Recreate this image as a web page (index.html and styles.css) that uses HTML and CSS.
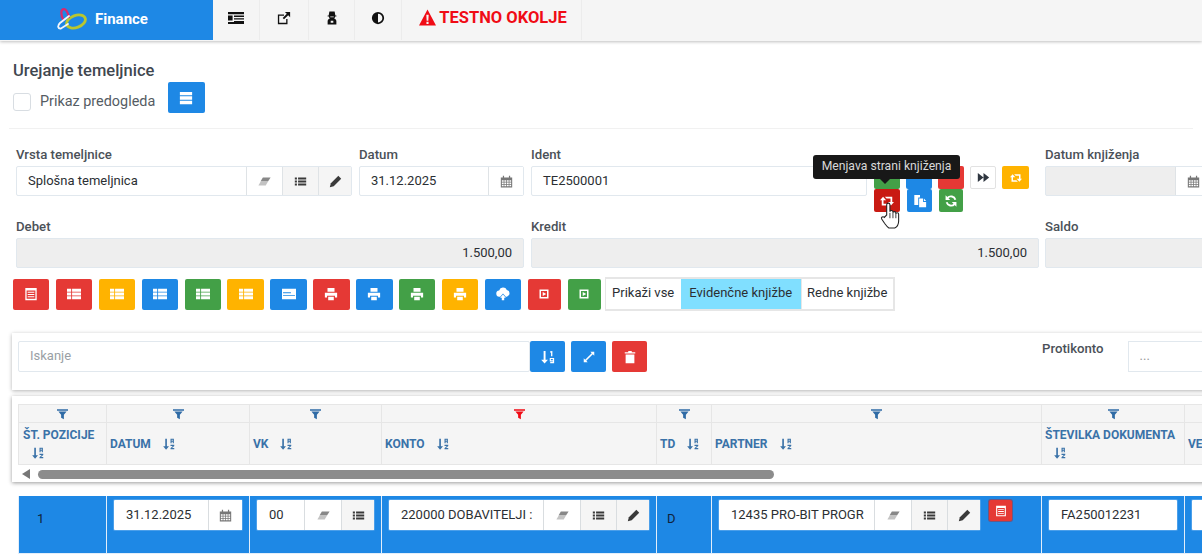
FILE: index.html
```html
<!DOCTYPE html>
<html lang="sl">

<head>
    <meta charset="UTF-8">
    <title>Finance</title>
    <link rel="stylesheet" href="styles.css">
</head>

<body>
    <!-- ikone -->
    <svg class="sprite" xmlns="http://www.w3.org/2000/svg">
        <symbol id="i-indent" viewBox="0 0 16 16"><path d="M0 2h16v2.200H0zM6 5.500h10v1.400H6zM0 5.600h4.600v4.800H0zM6 8.200h10v1.400H6zM6 10.900h10v1.400H6zM0 12h16v2H0z"/></symbol>
        <symbol id="i-extlink" viewBox="0 0 16 16"><path d="M1 4h7v1.500H2.500v8h8V9H12v6H1z"/><path d="M9 1h6v6l-2.200-2.200L8 9.500 6.500 8l4.700-4.800z"/></symbol>
        <symbol id="i-secret" viewBox="0 0 16 16"><path fill-rule="evenodd" d="M5 .5h6l.8 4.500H13v1.200h-1.500c0 1-.6 2-1.200 2.400 1.500.4 2.700 1.400 2.700 3V15.500H3v-3.900c0-1.600 1.200-2.600 2.700-3-.6-.4-1.200-1.400-1.200-2.400H3V5h1.200zM6 6.200v1h4v-1zM6.500 11v2.500h3V11z"/></symbol>
        <symbol id="i-adjust" viewBox="0 0 16 16"><path fill-rule="evenodd" d="M8 1a7 7 0 1 1 0 14A7 7 0 0 1 8 1zm0 2v10a5 5 0 0 0 0-10z"/></symbol>
        <symbol id="i-warn" viewBox="0 0 16 16"><path fill-rule="evenodd" d="M8 .5L16 15.500H0zM6.900 5.500l.3 5.500h1.600l.3-5.500zM7 12v2h2v-2z"/></symbol>
        <symbol id="i-stack" viewBox="0 0 16 16"><path d="M1 1h14v3.800H1zM1 6h14v4H1zM1 11.200h14V15H1z"/></symbol>
        <symbol id="i-eraser" viewBox="0 0 16 16"><path d="M6 3h9.500L12.300 8H3z"/><path opacity=".5" d="M3 8.500h9L9.500 13H.5z"/></symbol>
        <symbol id="i-list" viewBox="0 0 16 16"><path d="M1 3h2.600v2.400H1zM5 3h10v2.400H5zM1 6.800h2.600v2.400H1zM5 6.800h10v2.400H5zM1 10.600h2.600V13H1zM5 10.600h10V13H5z"/></symbol>
        <symbol id="i-pencil" viewBox="0 0 16 16"><path d="M11.500 1l3.500 3.500-9.200 9.200L1 15l1.300-4.800z"/></symbol>
        <symbol id="i-calendar" viewBox="0 0 16 16"><path fill-rule="evenodd" d="M1 3h14v12.500H1zM2.300 6.500v1.800h2.200V6.500zM5.400 6.500v1.800h2.200V6.500zM8.500 6.500v1.800h2.200V6.500zM11.600 6.500v1.800h2.100V6.500zM2.300 9.200V11h2.200V9.200zM5.400 9.200V11h2.200V9.200zM8.500 9.200V11h2.200V9.200zM11.600 9.200V11h2.100V9.200zM2.300 11.900v1.900h2.200v-1.900zM5.400 11.900v1.900h2.200v-1.900zM8.500 11.900v1.900h2.200v-1.900zM11.600 11.900v1.900h2.100v-1.900z"/><path d="M3.500 1H5v3H3.500zM11 1h1.500v3H11z"/></symbol>
        <symbol id="i-forward" viewBox="0 0 16 16"><path d="M1 2.500l7 5.500-7 5.500zM8 2.500L15 8l-7 5.500z"/></symbol>
        <symbol id="i-retweet" viewBox="0 0 16 16"><path d="M3.500 3L0 7h2v6h8.500l-2-2H4V7h3zM12.500 13L16 9h-2V3H5.500l2 2H12v4H9z"/></symbol>
        <symbol id="i-files" viewBox="0 0 16 16"><path d="M1.500 1H8v3H6v8.500H1.500zM7 5h4.500v4.200H15V15H7z"/><path d="M12.500 5L15 8h-2.500z"/></symbol>
        <symbol id="i-refresh" viewBox="0 0 16 16"><path fill="none" stroke="currentColor" stroke-width="2.200" d="M13 6.500A5.300 5.300 0 0 0 4 4.500M3 9.500a5.300 5.300 0 0 0 9 2"/><path d="M1.800 1.500v5.300h5.300zM14.200 14.500V9.200H8.900z"/></symbol>
        <symbol id="i-listalt" viewBox="0 0 16 16"><path fill-rule="evenodd" d="M1.500 1h13v14h-13zM3 4v9.500h10V4z"/><path d="M4.200 5.500h7.600v1.200H4.200zM4.200 8h7.600v1.200H4.200zM4.200 10.500h7.600v1.200H4.200z"/></symbol>
        <symbol id="i-thlist" viewBox="0 0 16 16"><path d="M0 2h4.800v3.300H0zM5.800 2H16v3.300H5.800zM0 6.300h4.800v3.300H0zM5.800 6.300H16v3.300H5.800zM0 10.700h4.800V14H0zM5.800 10.700H16V14H5.800z"/></symbol>
        <symbol id="i-card" viewBox="0 0 16 16"><path fill-rule="evenodd" d="M0 2h16v12H0zM1.200 6v1h9V6zM1.200 9v1h13.600V9z"/></symbol>
        <symbol id="i-print" viewBox="0 0 16 16"><path d="M4 1h8v4.500H4zM1 6.500h14V12h-2.500v-2h-9v2H1zM4.800 11h6.400v4H4.800z"/></symbol>
        <symbol id="i-cloud" viewBox="0 0 16 16"><path d="M4 11a3.500 3.500 0 0 1-.4-7 4.700 4.700 0 0 1 8.800-.6A3.900 3.900 0 0 1 12.500 11h-1.300L8 7.300 4.800 11zM8 8.500l3.300 3.700H9.400V15H6.600v-2.800H4.700z"/></symbol>
        <symbol id="i-play" viewBox="0 0 16 16"><path fill-rule="evenodd" d="M2 2h12v12H2zM4 4v8h8V4zM6.300 5.300L11 8l-4.700 2.700z"/></symbol>
        <symbol id="i-expand" viewBox="0 0 16 16"><path d="M9.500 2H14v4.500l-1.600-1.600-7.500 7.500L6.500 14H2V9.500l1.600 1.600 7.500-7.500z"/></symbol>
        <symbol id="i-trash" viewBox="0 0 16 16"><path d="M6 1h4v1.500h4V4H2V2.500h4zM3 5h10v10H3z"/></symbol>
        <symbol id="i-filter" viewBox="0 0 16 16"><path d="M0 1h16v2.400H0zM2 4.400h12L10 9v6.500l-4-2V9z"/></symbol>
        <symbol id="i-sort" viewBox="0 0 16 16"><path d="M3 1h2.200v10H8l-3.900 4.500L.2 11H3z"/><path fill-rule="evenodd" d="M10 1h4.500v6h-1.500V5h-1.500v2H10zM11.500 2.300v1.500H13V2.300z"/><path d="M10 9h5v1.500L12 13.400h3V15h-5v-1.500l3-2.900h-3z"/></symbol>
        <symbol id="i-sortnum" viewBox="0 0 16 16"><path d="M3 1h2.200v10H8l-3.900 4.500L.2 11H3z"/><path d="M10.500 1.500L13 1v6h-1.500V2.800l-1 .2z"/><path fill-rule="evenodd" d="M10 9h5v6h-4.500v-1.300h3V13H10zM11.300 10.200v1.600h2.200v-1.600z"/></symbol>
    </svg>

    <header class="topbar">
        <div class="brand">
            <svg class="logo" viewBox="0 0 30 22" fill="none" stroke-linecap="round">
                <ellipse cx="19" cy="13.500" rx="9.800" ry="6" transform="rotate(-20 19 13.500)" stroke="#b9c62f" stroke-width="2.800"/>
                <path d="M6.500 12C3.500 7 3.500 1.200 7 1.200c3 0 4 4.800 5 7.800" stroke="#d8296f" stroke-width="2.200"/>
                <path d="M12 8L3 15c-3 3-2 6 1 5.500L11 16" stroke="#f2f6fb" stroke-width="1.800"/>
            </svg>
            <span>Finance</span>
        </div>
        <a class="nav-item nav-first"><svg class="icon"><use href="#i-indent"/></svg></a>
        <a class="nav-item nav-wide"><svg class="icon"><use href="#i-extlink"/></svg></a>
        <a class="nav-item nav-slim"><svg class="icon"><use href="#i-secret"/></svg></a>
        <a class="nav-item"><svg class="icon"><use href="#i-adjust"/></svg></a>
        <div class="nav-item env-warning"><svg class="icon"><use href="#i-warn"/></svg>TESTNO OKOLJE</div>
    </header>

    <section class="page-head">
        <h1>Urejanje temeljnice</h1>
        <div class="preview-row">
            <span class="checkbox"></span>
            <span class="preview-label">Prikaz predogleda</span>
            <button class="btn blue stack-btn"><svg class="icon"><use href="#i-stack"/></svg></button>
        </div>
    </section>

    <section class="form">
        <div class="form-row first">
            <div class="field w-336">
                <label>Vrsta temeljnice</label>
                <div class="input-group">
                    <div class="control">Splošna temeljnica</div>
                    <span class="addon eraser"><svg class="icon"><use href="#i-eraser"/></svg></span>
                    <span class="addon gray"><svg class="icon"><use href="#i-list"/></svg></span>
                    <span class="addon gray"><svg class="icon"><use href="#i-pencil"/></svg></span>
                </div>
            </div>
            <div class="field w-165">
                <label>Datum</label>
                <div class="input-group">
                    <div class="control">31.12.2025</div>
                    <span class="addon cal"><svg class="icon"><use href="#i-calendar"/></svg></span>
                </div>
            </div>
            <div class="field w-336">
                <label>Ident</label>
                <div class="input-group">
                    <div class="control">TE2500001</div>
                </div>
            </div>
            <div class="ident-actions">
                <div class="action-row">
                    <button class="mini green"></button>
                    <button class="mini blue"></button>
                    <button class="mini red"></button>
                    <button class="mini white"><svg class="icon"><use href="#i-forward"/></svg></button>
                    <button class="mini yellow"><svg class="icon"><use href="#i-retweet"/></svg></button>
                </div>
                <div class="action-row">
                    <button class="mini hot"><svg class="icon"><use href="#i-retweet"/></svg></button>
                    <button class="mini blue"><svg class="icon"><use href="#i-files"/></svg></button>
                    <button class="mini green"><svg class="icon"><use href="#i-refresh"/></svg></button>
                </div>
                <div class="tooltip">Menjava strani knjiženja</div>
                <svg class="hand" viewBox="0 0 20 26">
                    <path d="M6 13V3.500C6 1.500 9 1.500 9 3.500V10c0-1.500 2.800-1.500 2.800 0v1c0-1.500 2.700-1.500 2.700 0v1c0-1.400 2.600-1.400 2.600.2v6.300c0 3-1.600 5.500-3.600 6.500H8c-1.500-.8-2.500-2.300-4-4.300L1.500 17c-1.200-1.800 1-3.200 2.300-1.800z" fill="#fff" stroke="#222" stroke-width="1"/>
                    <path d="M9 11v5M11.800 11v5M14.500 12v4" stroke="#222" stroke-width=".8"/>
                </svg>
            </div>
            <div class="field w-200 knjizenje">
                <label>Datum knjiženja</label>
                <div class="input-group disabled">
                    <div class="control"></div>
                    <span class="addon cal"><svg class="icon"><use href="#i-calendar"/></svg></span>
                </div>
            </div>
        </div>

        <div class="form-row totals">
            <div class="field w-508">
                <label>Debet</label>
                <div class="input-group disabled">
                    <div class="control right">1.500,00</div>
                </div>
            </div>
            <div class="field w-508 kredit">
                <label>Kredit</label>
                <div class="input-group disabled">
                    <div class="control right">1.500,00</div>
                </div>
            </div>
            <div class="field w-200">
                <label>Saldo</label>
                <div class="input-group disabled">
                    <div class="control right"></div>
                </div>
            </div>
        </div>
    </section>

    <div class="toolbar">
        <button class="btn red"><svg class="icon"><use href="#i-listalt"/></svg></button>
        <button class="btn red"><svg class="icon"><use href="#i-thlist"/></svg></button>
        <button class="btn yellow"><svg class="icon"><use href="#i-thlist"/></svg></button>
        <button class="btn blue"><svg class="icon"><use href="#i-thlist"/></svg></button>
        <button class="btn green"><svg class="icon"><use href="#i-thlist"/></svg></button>
        <button class="btn yellow"><svg class="icon"><use href="#i-thlist"/></svg></button>
        <button class="btn blue"><svg class="icon"><use href="#i-card"/></svg></button>
        <button class="btn red"><svg class="icon"><use href="#i-print"/></svg></button>
        <button class="btn blue"><svg class="icon"><use href="#i-print"/></svg></button>
        <button class="btn green"><svg class="icon"><use href="#i-print"/></svg></button>
        <button class="btn yellow"><svg class="icon"><use href="#i-print"/></svg></button>
        <button class="btn blue"><svg class="icon"><use href="#i-cloud"/></svg></button>
        <button class="btn red narrow"><svg class="icon"><use href="#i-play"/></svg></button>
        <button class="btn green narrow"><svg class="icon"><use href="#i-play"/></svg></button>
        <div class="toggle-group">
            <span class="toggle t-all">Prikaži vse</span>
            <span class="toggle t-evid active">Evidenčne knjižbe</span>
            <span class="toggle t-red">Redne knjižbe</span>
        </div>
    </div>

    <section class="search-panel">
        <div class="search-box">Iskanje</div>
        <button class="btn blue"><svg class="icon"><use href="#i-sortnum"/></svg></button>
        <button class="btn blue"><svg class="icon"><use href="#i-expand"/></svg></button>
        <button class="btn red"><svg class="icon"><use href="#i-trash"/></svg></button>
        <span class="protikonto-label">Protikonto</span>
        <div class="protikonto-box">...</div>
    </section>

    <section class="table-panel">
        <table class="grid head">
            <colgroup>
                <col class="c-pos"><col class="c-date"><col class="c-vk"><col class="c-konto"><col class="c-td"><col class="c-partner"><col class="c-doc"><col class="c-rest">
            </colgroup>
            <tr class="filters">
                <th><svg class="icon"><use href="#i-filter"/></svg></th>
                <th><svg class="icon"><use href="#i-filter"/></svg></th>
                <th><svg class="icon"><use href="#i-filter"/></svg></th>
                <th><svg class="icon active"><use href="#i-filter"/></svg></th>
                <th><svg class="icon"><use href="#i-filter"/></svg></th>
                <th><svg class="icon"><use href="#i-filter"/></svg></th>
                <th><svg class="icon"><use href="#i-filter"/></svg></th>
                <th></th>
            </tr>
            <tr class="titles">
                <th>ŠT. POZICIJE <svg class="icon sort"><use href="#i-sort"/></svg></th>
                <th>DATUM <svg class="icon sort"><use href="#i-sort"/></svg></th>
                <th>VK <svg class="icon sort"><use href="#i-sort"/></svg></th>
                <th>KONTO <svg class="icon sort"><use href="#i-sort"/></svg></th>
                <th>TD <svg class="icon sort"><use href="#i-sort"/></svg></th>
                <th>PARTNER <svg class="icon sort"><use href="#i-sort"/></svg></th>
                <th>ŠTEVILKA DOKUMENTA <svg class="icon sort"><use href="#i-sort"/></svg></th>
                <th>VE</th>
            </tr>
        </table>
        <div class="scrollbar">
            <span class="scroll-arrow"></span>
            <span class="scroll-thumb"></span>
        </div>
    </section>

    <table class="grid rows">
        <colgroup>
            <col class="c-pos"><col class="c-date"><col class="c-vk"><col class="c-konto"><col class="c-td"><col class="c-partner"><col class="c-doc"><col class="c-rest">
        </colgroup>
        <tr>
            <td><span class="cell-text pos">1</span></td>
            <td>
                <div class="input-group flat">
                    <div class="control">31.12.2025</div>
                    <span class="addon cal narrow"><svg class="icon"><use href="#i-calendar"/></svg></span>
                </div>
            </td>
            <td>
                <div class="input-group flat">
                    <div class="control">00</div>
                    <span class="addon eraser"><svg class="icon"><use href="#i-eraser"/></svg></span>
                    <span class="addon gray"><svg class="icon"><use href="#i-list"/></svg></span>
                </div>
            </td>
            <td>
                <div class="input-group flat">
                    <div class="control">220000 DOBAVITELJI :</div>
                    <span class="addon eraser"><svg class="icon"><use href="#i-eraser"/></svg></span>
                    <span class="addon gray"><svg class="icon"><use href="#i-list"/></svg></span>
                    <span class="addon gray"><svg class="icon"><use href="#i-pencil"/></svg></span>
                </div>
            </td>
            <td><span class="cell-text td">D</span></td>
            <td>
                <div class="partner-cell">
                    <div class="input-group flat">
                        <div class="control">12435 PRO-BIT PROGR</div>
                        <span class="addon eraser"><svg class="icon"><use href="#i-eraser"/></svg></span>
                        <span class="addon gray"><svg class="icon"><use href="#i-list"/></svg></span>
                        <span class="addon gray"><svg class="icon"><use href="#i-pencil"/></svg></span>
                    </div>
                    <button class="mini red note"><svg class="icon"><use href="#i-listalt"/></svg></button>
                </div>
            </td>
            <td>
                <div class="input-group flat">
                    <div class="control">FA250012231</div>
                </div>
            </td>
            <td>
                <div class="input-group flat">
                    <div class="control"></div>
                </div>
            </td>
        </tr>
    </table>
</body>

</html>
```

FILE: styles.css
```css
* {
    margin: 0;
    padding: 0;
    box-sizing: border-box;
}

html,
body {
    width: 1202px;
    height: 555px;
    overflow: hidden;
    background: #fff;
    font-family: 'Roboto', 'Liberation Sans', sans-serif;
    font-size: 13px;
    color: #2b2f33;
}

.sprite {
    display: none;
}

.icon {
    width: 16px;
    height: 16px;
    fill: currentColor;
    flex: none;
}

/* Zgornja vrstica */
.topbar {
    display: flex;
    height: 41px;
    background: #f5f5f5;
    box-shadow: 0 1px 3px rgba(0, 0, 0, 0.25);
    position: relative;
}

.brand {
    width: 213px;
    height: 40px;
    background: #1e88e5;
    color: #fff;
    display: flex;
    align-items: center;
    padding: 0 0 3px 57px;
    font-size: 15px;
    font-weight: 700;
    gap: 8px;
}

.logo {
    width: 30px;
    height: 22px;
    margin-top: 1px;
}

.nav-item {
    display: flex;
    align-items: center;
    justify-content: center;
    height: 40px;
    width: 47px;
    padding-bottom: 5px;
    border-right: 1px solid #ececec;
    color: #111;
}

.nav-item .icon {
    width: 14px;
    height: 14px;
}

.nav-first .icon {
    width: 16px;
    height: 16px;
}

.nav-wide {
    width: 49px;
}

.nav-slim {
    width: 46px;
}

.env-warning {
    width: 180px;
    gap: 3px;
    padding-left: 3px;
    color: #f00b15;
    font-size: 16.5px;
    font-weight: 700;
}

.env-warning .icon {
    width: 17px;
    height: 17px;
}

/* Naslov */
.page-head {
    height: 88px;
    margin: 0 9px;
    padding: 21px 4px 0;
    border-bottom: 1px solid #f1f1f1;
}

.page-head h1 {
    font-size: 16.5px;
    font-weight: 500;
    line-height: 18px;
    color: #3f4750;
}

.preview-row {
    display: flex;
    align-items: flex-start;
    height: 31px;
    margin-top: 2px;
}

.checkbox {
    width: 18px;
    height: 18px;
    margin-top: 11px;
    border: 1px solid #d8dde2;
    border-radius: 3px;
    background: #fff;
}

.preview-label {
    margin: 11px 0 0 9px;
    font-size: 14.4px;
    line-height: 18px;
    color: #555c63;
}

.stack-btn {
    margin-left: 13px;
}

.stack-btn .icon {
    width: 12px;
    height: 13px;
}

/* Obrazec */
.form {
    padding: 19px 0 0 16px;
}

.form-row {
    display: flex;
    gap: 7px;
}

.form-row.first {
    height: 48px;
}

.form-row.totals {
    margin-top: 24px;
}

.field {
    flex: none;
}

.w-165 { width: 165px; }
.w-200 { width: 200px; }
.w-336 { width: 336px; }
.w-508 { width: 508px; }

.kredit {
    margin-right: -1px;
}

.field label {
    display: block;
    height: 14px;
    margin-bottom: 4px;
    font-size: 13.2px;
    font-weight: 500;
    line-height: 14px;
    color: #4b5158;
}

.input-group {
    display: flex;
    height: 30px;
    border: 1px solid #e1e8ee;
    border-radius: 2px;
    background: #fff;
}

.control {
    flex: 1;
    min-width: 0;
    padding: 0 11px;
    line-height: 28px;
    white-space: nowrap;
    overflow: hidden;
}

.control.right {
    text-align: right;
    padding-right: 11px;
}

.input-group.disabled {
    background: #eee;
}

.knjizenje .control {
    flex: none;
    width: 129px;
}

.addon {
    flex: none;
    width: 36px;
    display: flex;
    align-items: center;
    justify-content: center;
    border-left: 1px solid #dfe3e6;
    color: #3a3a3a;
}

.addon:last-child {
    width: 33px;
}

.addon .icon {
    width: 13px;
    height: 13px;
}

.addon.gray {
    background: #f5f5f5;
}

.addon.eraser {
    color: #888;
}

.addon.cal {
    width: 35px;
    color: #777;
    background: #fff;
}

.addon.cal.narrow {
    width: 34px;
}

/* Gumbi ob identu */
.ident-actions {
    flex: none;
    width: 164px;
    padding-top: 18px;
    position: relative;
}

.action-row {
    display: flex;
    gap: 6px;
    height: 23px;
}

.action-row:nth-child(2) {
    gap: 7px;
}

.action-row:nth-child(2) .mini:nth-child(2) {
    width: 25px;
}

.action-row:nth-child(2) .mini:nth-child(3) {
    width: 24px;
}

.action-row:nth-child(2) .icon {
    width: 14px;
    height: 14px;
}

.mini {
    width: 26px;
    height: 23px;
    border: 0;
    border-radius: 2px;
    color: #fff;
    display: flex;
    align-items: center;
    justify-content: center;
}

.mini .icon {
    width: 12px;
    height: 12px;
}

.mini.white {
    background: #fff;
    border: 1px solid #e2e2e2;
    color: #2f3640;
}

.mini.white .icon {
    width: 13px;
    height: 13px;
}

.mini.yellow {
    width: 27px;
}

.hot {
    background: #c91a12;
}

.tooltip {
    position: absolute;
    left: -61px;
    top: 7px;
    width: 147px;
    height: 24px;
    background: #181818;
    border-radius: 3px;
    color: #d9d9d9;
    font-size: 12.2px;
    line-height: 23px;
    text-align: center;
    white-space: nowrap;
}

.tooltip::after {
    content: '';
    position: absolute;
    left: 67px;
    top: 100%;
    border: 5px solid transparent;
    border-top-color: #181818;
    border-bottom-width: 0;
}

.hand {
    position: absolute;
    left: 6px;
    top: 53px;
    width: 22px;
    height: 28px;
}

/* Orodna vrstica */
.toolbar {
    display: flex;
    align-items: center;
    gap: 6.5px;
    height: 34px;
    margin: 9px 0 0 13px;
}

.btn {
    flex: none;
    width: 36.4px;
    height: 31px;
    border: 0;
    border-radius: 2px;
    color: #fff;
    display: flex;
    align-items: center;
    justify-content: center;
}

.btn .icon {
    width: 14px;
    height: 14px;
}

.btn.narrow {
    width: 33.5px;
}

.btn.narrow .icon {
    width: 12px;
    height: 12px;
}

.red { background: #e53935; }
.blue { background: #1e88e5; }
.green { background: #43a047; }
.yellow { background: #ffb300; }

.toggle-group {
    display: flex;
    height: 34px;
    margin-left: -3px;
    border: 2px solid #e6e6e6;
    border-left-width: 1px;
    font-size: 13px;
    line-height: 27px;
    background: #fff;
}

.toggle {
    text-align: center;
    white-space: nowrap;
}

.t-all { width: 75px; }
.t-evid { width: 120px; }
.t-red { width: 92px; border-left: 1px solid #e6e6e6; }

.toggle.active {
    background: #80dfff;
}

/* Iskanje */
.search-panel {
    display: flex;
    gap: 6px;
    width: 1300px;
    height: 57px;
    margin: 22px 0 0 12px;
    padding: 8px 6px;
    background: #fff;
    box-shadow: 0 1px 4px rgba(0, 0, 0, 0.3);
    position: relative;
}

.search-box {
    flex: none;
    width: 512px;
    height: 31px;
    margin-right: -6px;
    padding-left: 11px;
    border: 1px solid #e1e8ee;
    border-radius: 2px;
    color: #9a9fa5;
    line-height: 28px;
}

.search-panel .btn {
    width: 35px;
}

.protikonto-label {
    margin: 0 0 0 389px;
    padding-top: 1px;
    font-size: 13.2px;
    font-weight: 500;
    color: #4b5158;
    line-height: 14px;
}

.protikonto-box {
    flex: none;
    width: 200px;
    height: 31px;
    margin-left: 18px;
    padding-left: 11px;
    border: 1px solid #e1e8ee;
    color: #999;
    line-height: 28px;
}

/* Tabela */
.table-panel {
    width: 1300px;
    height: 86px;
    margin: 6px 0 0 12px;
    padding: 8px 0 0 6px;
    background: #fff;
    box-shadow: 0 1px 4px rgba(0, 0, 0, 0.4);
    position: relative;
}

.grid {
    table-layout: fixed;
    width: 1400px;
    border-collapse: collapse;
}

.c-pos { width: 88px; }
.c-date { width: 143px; }
.c-vk { width: 132px; }
.c-konto { width: 275px; }
.c-td { width: 55px; }
.c-partner { width: 330px; }
.c-doc { width: 143px; }
.c-rest { width: 234px; }

.head th {
    background: #f5f5f5;
    border: 1px solid #e6e6e6;
    color: #3a72a8;
    font-size: 12px;
    font-weight: 700;
    text-align: left;
    vertical-align: middle;
}

.filters th {
    height: 18px;
    text-align: center;
    line-height: 0;
}

.filters .icon {
    width: 11px;
    height: 14px;
    color: #2f6ba6;
}

.filters .icon.active {
    color: #f00b15;
}

.titles th {
    height: 42px;
    padding: 0 3px;
    line-height: 18px;
}

.titles th:first-child {
    padding-left: 4px;
}

.icon.sort {
    width: 12px;
    height: 14px;
    margin-left: 9px;
    vertical-align: -3px;
}

.scrollbar {
    display: flex;
    align-items: center;
    height: 18px;
    padding-left: 4px;
}

.scroll-arrow {
    border: 5px solid transparent;
    border-right: 8px solid #777;
    border-left-width: 0;
}

.scroll-thumb {
    width: 736px;
    height: 9px;
    margin-left: 8px;
    border-radius: 5px;
    background: #8c8c8c;
}

.rows {
    margin: 14px 0 0 18px;
}

.rows td {
    height: 57px;
    padding: 4px 7px;
    background: #1e88e5;
    border: 1px solid #e3eefa;
    border-top-width: 0;
    vertical-align: top;
}

.rows .input-group {
    border: 0;
    border-radius: 1px;
    box-shadow: 0 0 0 1px rgba(255, 255, 255, 0.2);
}

.rows .control {
    padding: 0 12px;
    line-height: 30px;
}

.rows .addon {
    border-left-color: #d9dde0;
}

.rows .addon.eraser {
    width: 37px;
}

.cell-text {
    display: block;
    padding-top: 10px;
    line-height: 18px;
    color: #10233a;
}

.cell-text.pos {
    padding-left: 11px;
}

.cell-text.td {
    padding-left: 3px;
}

.partner-cell {
    display: flex;
    gap: 9px;
}

.partner-cell .input-group {
    width: 261px;
    flex: none;
}

.mini.note {
    width: 23px;
    height: 21px;
    flex: none;
    box-shadow: 0 0 0 1px rgba(180, 40, 40, 0.5);
}
```
